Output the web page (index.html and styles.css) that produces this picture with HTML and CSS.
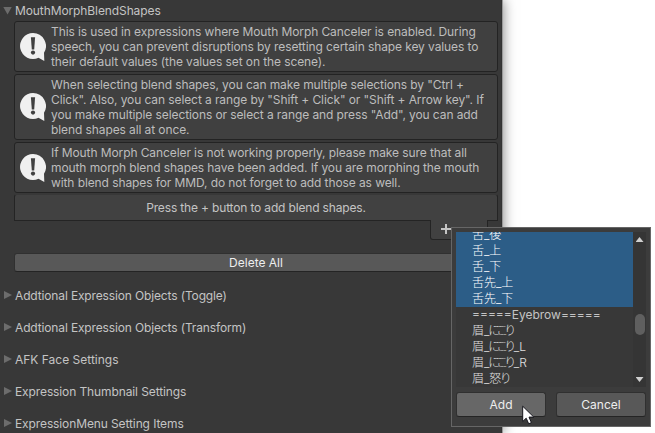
FILE: index.html
```html
<!DOCTYPE html>
<html lang="en">
<head>
<meta charset="utf-8">
<title>MouthMorphBlendShapes</title>
<link rel="stylesheet" href="styles.css">
</head>
<body>
<svg class="defs" width="0" height="0"><symbol id="info" viewBox="0 0 26 28"><path fill="#f0f0f0" d="M13 0a13 13 0 1 0 5.5 24.8L24.3 28 24 19.8A13 13 0 0 0 13 0Z"/><path fill="#404040" d="M10.9 4.2h4.2l-.9 12.3h-2.4Z"/><circle cx="13" cy="19.6" r="2.1" fill="#404040"/></symbol></svg>
<main class="inspector">
  <h1 class="title"><i class="arrow down"></i><span>MouthMorphBlendShapes</span></h1>
  <section class="content">
    <div class="help"><svg class="icon"><use href="#info"/></svg><p>This is used in expressions where Mouth Morph Canceler is enabled. During<br>speech, you can prevent disruptions by resetting certain shape key values to<br>their default values (the values set on the scene).</p></div>
    <div class="help tall"><svg class="icon"><use href="#info"/></svg><p>When selecting blend shapes, you can make multiple selections by "Ctrl +<br>Click". Also, you can select a range by "Shift + Click" or "Shift + Arrow key". If<br>you make multiple selections or select a range and press "Add", you can add<br>blend shapes all at once.</p></div>
    <div class="help"><svg class="icon"><use href="#info"/></svg><p>If Mouth Morph Canceler is not working properly, please make sure that all<br>mouth morph blend shapes have been added. If you are morphing the mouth<br>with blend shapes for MMD, do not forget to add those as well.</p></div>
    <div class="empty">Press the + button to add blend shapes.</div>
    <div class="footer"><svg width="10" height="10"><path d="M4 0h2v4h4v2H6v4H4V6H0V4h4Z" fill="#c4c4c4"/></svg></div>
    <button class="delete">Delete All</button>
  </section>
  <ul class="foldouts">
    <li><i class="arrow"></i><span>Addtional Expression Objects (Toggle)</span></li>
    <li><i class="arrow"></i><span>Addtional Expression Objects (Transform)</span></li>
    <li><i class="arrow"></i><span>AFK Face Settings</span></li>
    <li><i class="arrow"></i><span>Expression Thumbnail Settings</span></li>
    <li><i class="arrow"></i><span>ExpressionMenu Setting Items</span></li>
  </ul>
</main>
<div class="popup">
  <div class="picker">
    <ul class="list">
      <li class="on">舌_後</li><li class="on">舌_上</li><li class="on">舌_下</li><li class="on">舌先_上</li><li class="on">舌先_下</li>
      <li class="latin">=====Eyebrow=====</li><li>眉_<span class="kana">にこり</span></li><li>眉_<span class="kana">にこり</span>_L</li><li>眉_<span class="kana">にこり</span>_R</li><li>眉_怒<span class="kana">り</span></li>
    </ul>
    <div class="scroll"><i class="up"></i><i class="thumb"></i><i class="dn"></i></div>
  </div>
  <div class="actions"><button class="hover">Add</button><button>Cancel</button></div>
</div>
<svg class="cursor" width="13" height="20" viewBox="0 0 13 20"><path d="M.7 1.2v15.3l3.5-3.3 2.5 5.6 2.7-1.2-2.4-5.5h4.8Z" fill="#fff" stroke="#15151c"/></svg>
</body>
</html>
```

FILE: styles.css
```css
* { box-sizing: border-box; }
body { margin: 0; width: 655px; height: 433px; overflow: hidden; background: #fff; font: 12px/15px Inter, "Noto Sans CJK JP", sans-serif; color: #c4c4c4; }
.defs { position: absolute; }
ul, p, h1 { margin: 0; padding: 0; list-style: none; font-size: 12px; font-weight: 400; }
.inspector { width: 502px; height: 433px; background: #383838; border-right: 1px solid #333; box-shadow: 1px 0 0 #999, 1px 0 12px rgba(0,0,0,.5); }
.title { display: flex; align-items: center; height: 21px; padding-left: 3px; letter-spacing: -.1px; }
.arrow { width: 8px; height: 8px; margin-right: 4px; background: #6c6c6c; clip-path: polygon(0 0, 100% 50%, 0 100%); }
.arrow.down { width: 9px; margin-right: 3px; clip-path: polygon(0 0, 100% 0, 50% 100%); }
.content { width: 484px; margin-left: 14px; }
.help { display: flex; align-items: center; height: 51px; margin-bottom: 2px; padding-left: 5px; background: #404040; border: 1px solid #232323; border-radius: 3px; color: #bdbdbd; letter-spacing: -.095px; }
.help.tall { height: 66px; }
.icon { width: 26px; height: 28px; margin-right: 5px; flex: none; }
.help p { white-space: nowrap; }
.empty { height: 27px; margin-top: -1px; padding-top: 5px; text-align: center; background: #414141; border: 1px solid #242424; border-top-color: #383838; border-radius: 3px 3px 0 0; letter-spacing: -.16px; }
.footer { position: relative; width: 58px; height: 20px; margin: -1px 0 0 416px; padding: 4px 0 0 10px; background: #414141; border: 1px solid #242424; border-top: 0; border-radius: 0 0 3px 3px; }
.footer svg { display: block; }
button { display: block; padding: 0; font: inherit; color: #eee; background: #585858; border: 1px solid #303030; border-bottom-color: #242424; border-radius: 3px; }
.delete { width: 484px; height: 19px; margin-top: 13px; line-height: 17px; }
.foldouts { padding-top: 7px; letter-spacing: -.14px; }
.foldouts li { display: flex; align-items: center; height: 32px; padding-left: 4px; }
.foldouts li:nth-child(3) { letter-spacing: 0; }
.foldouts li:nth-child(n+4) { letter-spacing: -.11px; }
.foldouts .arrow { margin-right: 3px; }
.popup { position: absolute; left: 451px; top: 227px; width: 200px; height: 200px; padding: 4px; background: #3c3c3c; border: 1px solid #666; }
.picker { display: flex; height: 155px; overflow: hidden; background: #383838; }
.list { width: 177px; margin-top: -5px; font-weight: 300; color: #e0e0e0; }
.list li { height: 16px; padding-left: 16px; line-height: 16px; white-space: nowrap; }
.list .on { background: #2c5d87; color: #fff; }
.list .latin { letter-spacing: 0; font-weight: 400; color: #c4c4c4; }
.kana { font-feature-settings: "palt"; letter-spacing: -2.6px; margin: 0 1.5px 0 -1px; }
.scroll { display: flex; flex-direction: column; align-items: center; width: 13px; padding-top: 5px; background: #353535; }
.up, .dn { width: 8px; height: 5px; background: #d0d0d0; clip-path: polygon(50% 0, 100% 100%, 0 100%); }
.dn { margin-top: 42px; clip-path: polygon(0 0, 100% 0, 50% 100%); }
.thumb { width: 10px; height: 21px; margin-top: 72px; background: #5f5f5f; border-radius: 5px; }
.actions { display: flex; justify-content: space-between; margin-top: 5px; }
.actions button { width: 90px; height: 25px; font-size: 12px; }
.actions .hover { background: #676767; }
.cursor { position: absolute; left: 522px; top: 405px; }
```
